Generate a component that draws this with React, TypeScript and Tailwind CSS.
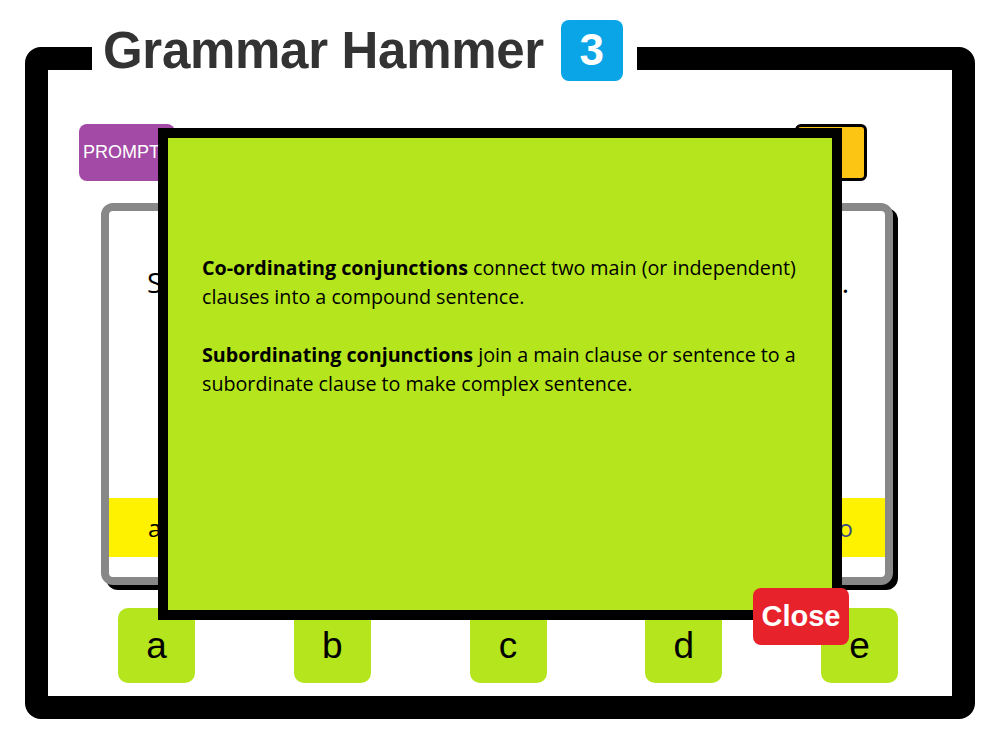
import React from "react";

const letters = ["a", "b", "c", "d", "e"];

export default function App() {
  return (
    <div className="relative w-[1000px] h-[750px] bg-white overflow-hidden font-['Liberation_Sans',Arial,sans-serif]">
      {/* game frame */}
      <div className="absolute left-[25px] top-[47px] w-[950px] h-[672px] rounded-[16px] border-[23px] border-black bg-white">
        <div className="flex flex-col h-full rounded-[8px] bg-white pt-[54px]">
          {/* top bar */}
          <div className="flex items-center justify-between pl-[31px] pr-[85px] h-[57px]">
            <button className="h-[57px] w-[96px] rounded-[8px] bg-[#a349a6] text-white text-[18px] text-left pl-[4px]">
              PROMPT
            </button>
            <button className="h-[57px] w-[72px] rounded-[6px] border-[3px] border-black bg-[#fcc514]" />
          </div>

          {/* question card */}
          <div className="ml-[53px] mt-[22px] w-[792px] h-[382px] rounded-[12px] border-[8px] border-[#888888] bg-white shadow-[5px_5px_0_#000] flex flex-col">
            <div className="flex justify-between pl-[38px] pr-[36px] pt-[50px] text-[28px] text-black font-['Comic_Sans_MS','Open_Sans',sans-serif]">
              <span>S</span>
              <span>.</span>
            </div>
            <div className="mt-auto mb-[20px] h-[59px] bg-[#fff200] flex items-center justify-between pl-[39px] pr-[32px] text-[24px] font-['Comic_Sans_MS','Open_Sans',sans-serif]">
              <span className="text-black">and</span>
              <span className="text-[#3b4a8a]">so</span>
            </div>
          </div>

          {/* answer choices */}
          <div className="flex justify-between ml-[70px] w-[780px] mt-[23px]">
            {letters.map((l) => (
              <button
                key={l}
                className="w-[77px] h-[75px] rounded-[10px] bg-[#b5e51d] text-black text-[37px] leading-none"
              >
                {l}
              </button>
            ))}
          </div>
        </div>

        {/* title sitting on the border */}
        <div className="absolute left-[44px] top-[-51px] flex items-center gap-[17px] bg-white pl-[11px] pr-[14px] h-[62px]">
          <h1 className="text-[51px] font-bold text-[#333333] leading-none tracking-[-0.3px]">
            Grammar Hammer
          </h1>
          <span className="w-[62px] h-[61px] rounded-[8px] bg-[#09a5e6] text-white text-[44px] font-bold flex items-center justify-center leading-none">
            3
          </span>
        </div>
      </div>

      {/* info modal */}
      <div className="absolute left-[158px] top-[128px] w-[684px] h-[492px] border-[10px] border-black bg-[#b5e61d] pl-[34px] pt-[115px] text-[19.7px] leading-[29px] text-black font-['Comic_Sans_MS','Open_Sans',sans-serif]">
        <p>
          <b>Co-ordinating conjunctions</b> connect two main (or independent)
          <br />
          clauses into a compound sentence.
        </p>
        <p className="mt-[29px]">
          <b>Subordinating conjunctions</b> join a main clause or sentence to a
          <br />
          subordinate clause to make complex sentence.
        </p>
      </div>

      <button className="absolute left-[753px] top-[588px] w-[96px] h-[57px] rounded-[8px] bg-[#e8222b] text-white text-[29px] font-bold leading-none">
        Close
      </button>
    </div>
  );
}
